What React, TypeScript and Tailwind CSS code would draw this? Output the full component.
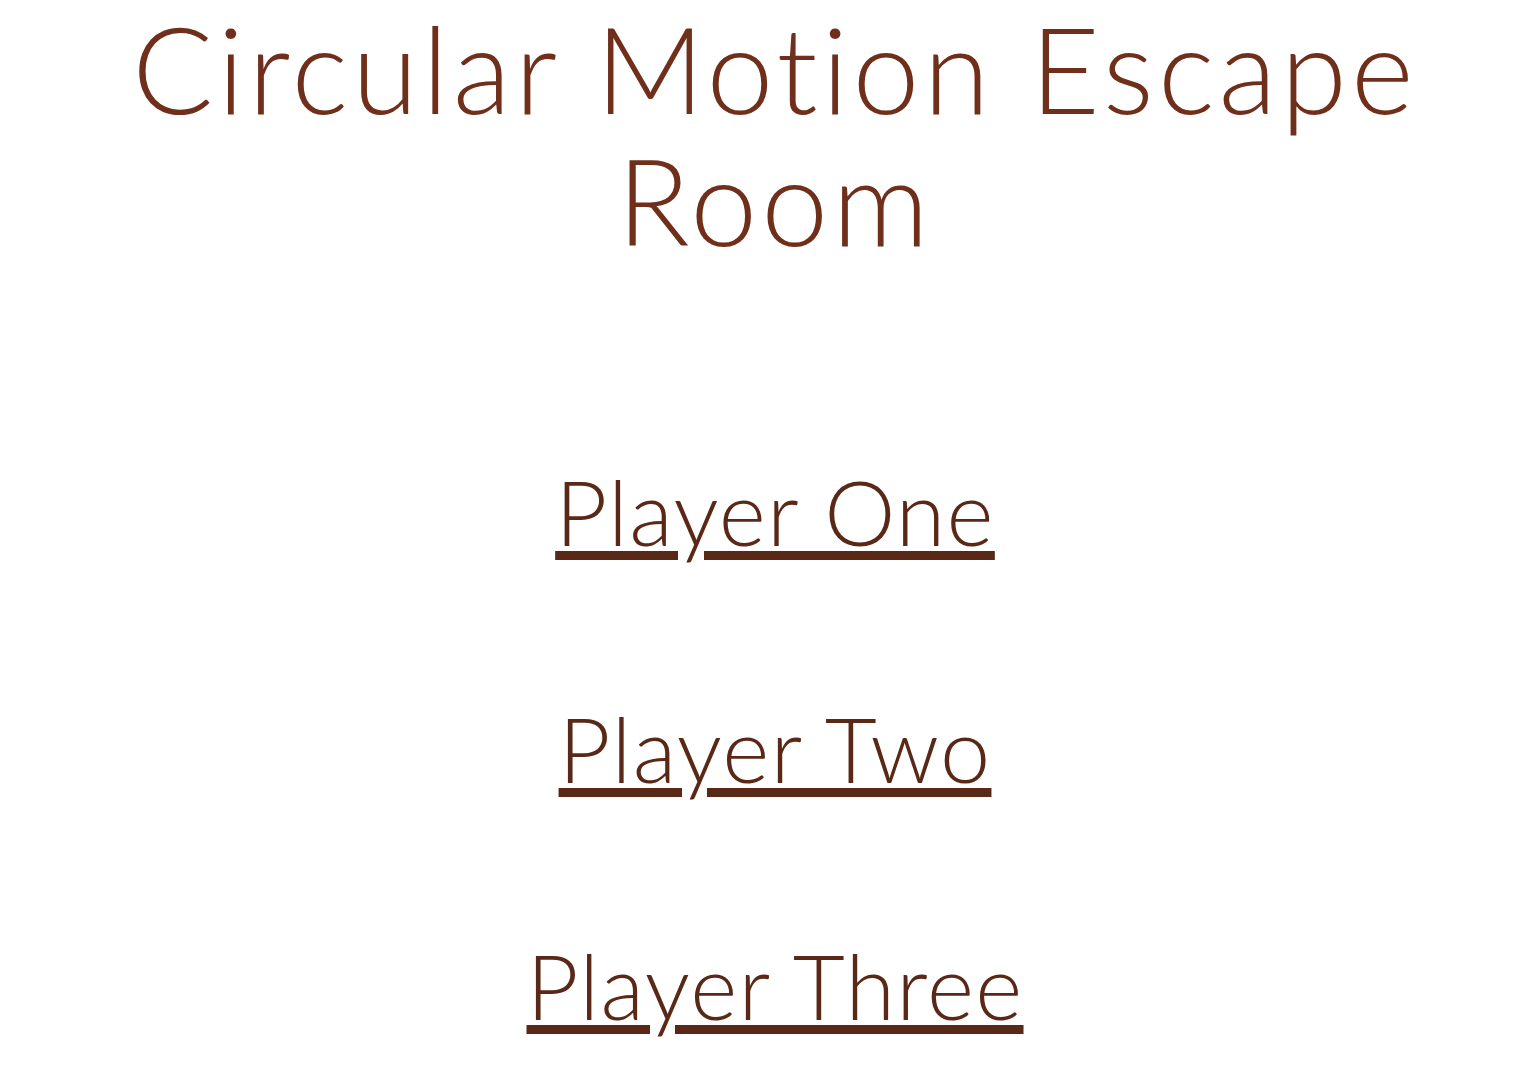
export default function App() {
  const players = ["Player One", "Player Two", "Player Three"]

  return (
    <div className="min-h-screen bg-white pl-[30px] text-center font-['Lato',sans-serif] font-light">
      <h1 className="pt-[2px] text-[120px] leading-[132px] tracking-[0.034em] text-[#6f2f1a]">
        Circular Motion Escape Room
      </h1>

      <div className="mt-[200px] flex flex-col items-center gap-[147px]">
        {players.map((name) => (
          <a
            key={name}
            href="#"
            className="text-[90px] leading-[90px] tracking-[0.015em] text-[#5a2816] underline"
          >
            {name}
          </a>
        ))}
      </div>
    </div>
  )
}
